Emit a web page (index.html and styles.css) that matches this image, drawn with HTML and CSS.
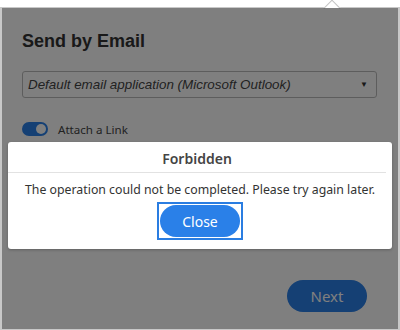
FILE: index.html
```html
<!DOCTYPE html>
<html lang="en">
  <head>
    <meta charset="UTF-8" />
    <title>Send by Email</title>
    <link rel="stylesheet" href="styles.css">
  </head>
  <body>
    <div class="caret"></div>
    <section class="panel">
      <h1>Send by Email</h1>
      <div class="select">
        <span>Default email application (Microsoft Outlook)</span>
        <span class="arrow">&#9660;</span>
      </div>
      <label class="toggle-row">
        <span class="toggle"><span class="knob"></span></span>
        Attach a Link
      </label>
      <div class="actions">
        <button class="next">Next</button>
      </div>

      <div class="overlay"></div>

      <div class="modal">
        <h2>Forbidden</h2>
        <p>The operation could not be completed. Please try again later.</p>
        <div class="modal-actions">
          <span class="focus-ring"><button class="close">Close</button></span>
        </div>
      </div>
    </section>
  </body>
</html>
```

FILE: styles.css
```css
* {
  box-sizing: border-box;
}

html,
body {
  margin: 0;
  height: 100%;
  background: #fff;
}

body {
  padding-top: 7px;
  position: relative;
  overflow: hidden;
  font-family: "Liberation Sans", Arial, sans-serif;
}

.caret {
  position: absolute;
  top: 0;
  left: 326px;
  width: 12px;
  height: 12px;
  background: #fff;
  border-top: 1px solid #c4c4c4;
  border-left: 1px solid #c4c4c4;
  transform: translateY(2px) rotate(45deg);
  z-index: 2;
}

.panel {
  position: relative;
  height: 323px;
  border: 1px solid #c8c8c8;
  border-left-width: 2px;
  border-right-width: 2px;
  background: #fff;
  padding: 22px 20px 0 20px;
}

h1 {
  margin: 0;
  font-size: 18px;
  font-weight: bold;
  color: #333;
  line-height: 22px;
}

.select {
  margin-top: 19px;
  height: 27px;
  width: 355px;
  border: 1px solid #bbb;
  border-radius: 3px;
  display: flex;
  align-items: center;
  justify-content: space-between;
  padding: 0 8px 0 5px;
  font-size: 13.4px;
  font-style: italic;
  color: #444;
}

.arrow {
  font-style: normal;
  font-size: 8px;
  color: #333;
}

.toggle-row {
  margin-top: 23px;
  height: 16px;
  display: flex;
  align-items: center;
  gap: 10px;
  font-family: "Noto Sans", "Open Sans", sans-serif;
  font-size: 11.6px;
  color: #444;
}

.toggle {
  width: 26px;
  height: 14px;
  border-radius: 7px;
  background: #2a80e8;
  display: flex;
  justify-content: flex-end;
  align-items: center;
  padding: 0 2px;
}

.knob {
  width: 10px;
  height: 10px;
  border-radius: 50%;
  background: #fff;
}

.actions {
  display: flex;
  justify-content: flex-end;
  margin-top: 143px;
  padding-right: 11px;
}

button {
  border: none;
  font-family: "Noto Sans", "Open Sans", sans-serif;
  color: #fff;
  background: #2a80e8;
  cursor: pointer;
}

.next {
  width: 80px;
  height: 32px;
  border-radius: 16px;
  font-size: 15px;
}

.overlay {
  position: absolute;
  inset: 0;
  background: rgba(0, 0, 0, 0.5);
  z-index: 3;
}

.modal {
  position: absolute;
  top: 134px;
  left: 6px;
  right: 6px;
  height: 107px;
  background: #fff;
  border-radius: 3px;
  box-shadow: 0 1px 3px rgba(0, 0, 0, 0.25);
  z-index: 4;
  font-family: "Noto Sans", "Open Sans", sans-serif;
  text-align: center;
}

.modal h2 {
  margin: 0 6px 0 0;
  height: 31px;
  line-height: 34px;
  font-size: 14px;
  font-weight: 600;
  color: #444;
  border-bottom: 1px solid #e2e2e2;
}

.modal p {
  margin: 8px 0 0;
  font-size: 12.3px;
  line-height: 18px;
  color: #333;
}

.modal-actions {
  margin-top: 3px;
  display: flex;
  justify-content: center;
}

.focus-ring {
  display: inline-flex;
  padding: 1px;
  border: 2px solid #2a7de1;
}

.close {
  width: 80px;
  height: 32px;
  border-radius: 16px;
  font-size: 14px;
}
```
